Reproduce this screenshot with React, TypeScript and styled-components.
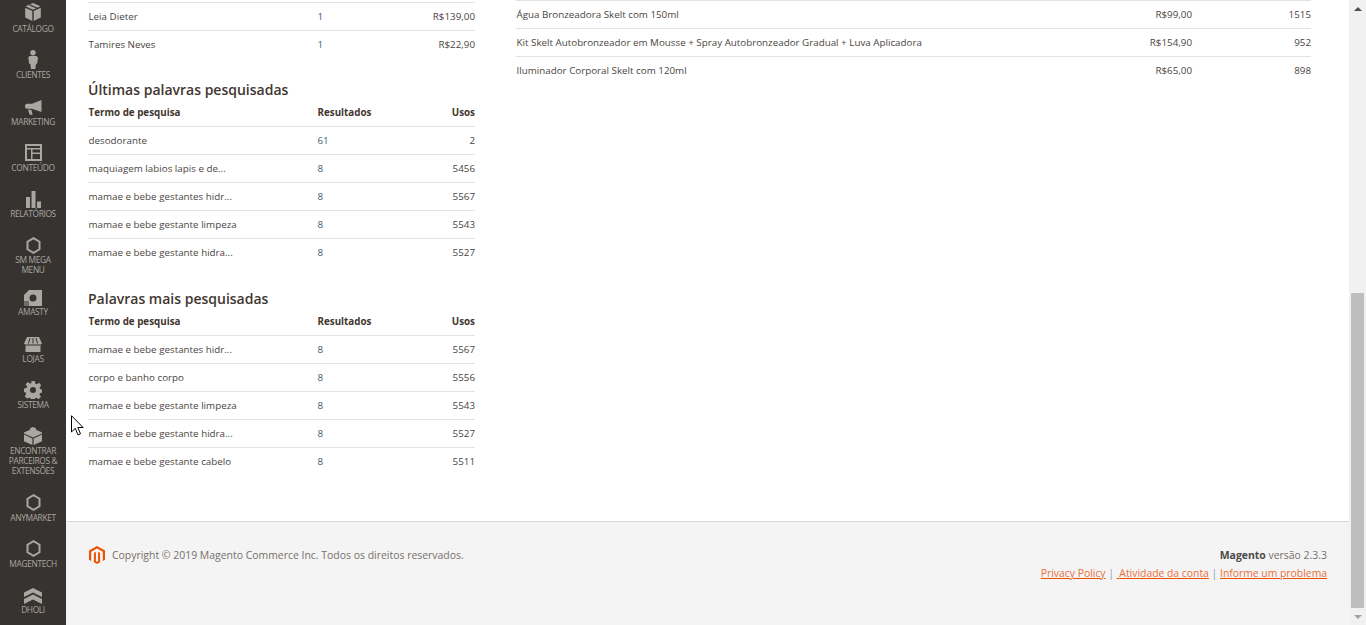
import React from "react";
import styled, { createGlobalStyle } from "styled-components";

const GlobalStyles = createGlobalStyle`
html, body {
  margin: 0;
  height: 100%;
  overflow: hidden;
}
body {
  box-sizing: border-box;
  background: #ffffff;
  font-family: "Open Sans", Arial, sans-serif;
  font-size: 9.8px;
  color: #4a4542;
}
`;

const iconColor = "#aaa6a0";

const BoxIcon = () => (
  <svg width="16" height="18" viewBox="0 0 16 18">
    <path fill={iconColor} d="M8 0l7.500 3.300L8 6.800.5 3.300zM.2 4.700l7.100 3.300V18L.2 14.400zM15.800 4.700L8.700 8v10l7.100-3.600z" />
    <path fill="#373330" d="M3.600 1.900l7.600 3.500 1.200-.6-7.500-3.500z" />
  </svg>
);
const PersonIcon = () => (
  <svg width="10" height="19" viewBox="0 0 10 19">
    <circle cx="5" cy="2.700" r="2.700" fill={iconColor} />
    <path fill={iconColor} d="M1.500 6h7L10 7.500l-.8 6-1.200.5-.7 5H3l-.7-5-1.200-.5-.8-6z" />
  </svg>
);
const MegaphoneIcon = () => (
  <svg width="17" height="15" viewBox="0 0 17 15">
    <path fill={iconColor} d="M16.500 0v12L7 8.800H1.500L0 7.500V5l1.500-1.300H7zM3 9.800h3.300l1.400 5H4.700z" />
  </svg>
);
const LayoutIcon = () => (
  <svg width="17" height="17" viewBox="0 0 17 17">
    <path fill={iconColor} fillRule="evenodd" d="M0 0h17v17H0zM2 2v2h13V2zM2 5.500V15h4V5.500zm5.500 0V8.500H15V5.500zm0 4.500v5H15v-5z" />
  </svg>
);
const BarsIcon = () => (
  <svg width="15" height="17" viewBox="0 0 15 17">
    <path fill={iconColor} d="M0 6h4v11H0zM5.500 0h4v17h-4zM11 10.500h4V17h-4z" />
  </svg>
);
const HexIcon = () => (
  <svg width="15" height="17" viewBox="0 0 15 17">
    <path fill="none" stroke={iconColor} strokeWidth="2" d="M7.500 1.200l6 3.500v7.600l-6 3.500-6-3.500V4.700z" />
  </svg>
);
const AmastyIcon = () => (
  <svg width="18" height="16" viewBox="0 0 18 16">
    <path fill={iconColor} fillRule="evenodd" d="M5 0h13v16H0V5zM9 4.500a3.500 3.500 0 1 0 0 7 3.500 3.500 0 0 0 0-7z" />
    <path fill="#6f6b67" d="M0 11h5v5H0z" />
  </svg>
);
const StoreIcon = () => (
  <svg width="18" height="15" viewBox="0 0 18 15">
    <path fill={iconColor} d="M3 0h12l3 6.500-1 1H1L0 6.500zM1.500 8.500h15V15h-15z" />
    <path stroke="#373330" strokeWidth="1" d="M6 1L4.500 6.500M9 1v5.500M12 1l1.500 5.500" />
  </svg>
);
const GearIcon = () => (
  <svg width="18" height="18" viewBox="0 0 18 18">
    <path fill={iconColor} fillRule="evenodd" d="M7.200 0h3.600l.5 2.600 1.500.7 2.300-1.500 2.100 2.500-1.600 2.100.5 1.500 2.400.6v3l-2.400.6-.6 1.600 1.500 2.100-2.400 2.400-2.200-1.500-1.500.6-.5 2.700H7.200l-.5-2.700-1.500-.6L3 17.600.7 15.200l1.500-2.100-.6-1.600L0 10.900V7.500l2.600-.6.6-1.500L1.600 3.300 3.800 1l2.300 1.500 1.500-.6zM9 6a3 3 0 1 0 0 6 3 3 0 0 0 0-6z" />
  </svg>
);
const BrickIcon = () => (
  <svg width="18" height="18" viewBox="0 0 18 18">
    <path fill={iconColor} d="M9 0l3 1.300v1.400L16 4.500l2 .9v1L9 10.500 0 6.400v-1l2-.9 4-1.800V1.300z" />
    <path fill={iconColor} d="M0 7.500l8.400 3.900V18L0 14.200zM18 7.500l-8.400 3.900V18l8.400-3.800z" />
  </svg>
);
const DholiIcon = () => (
  <svg width="18" height="16" viewBox="0 0 18 16">
    <path fill={iconColor} d="M9 0l9 4.500V9L9 4.500 0 9V4.500zM9 6.500l9 4.500v5L9 11.500 0 16v-5z" />
  </svg>
);

const MagentoLogo = () => (
  <svg width="16" height="18" viewBox="0 0 16 18">
    <path fill="#eb5202" d="M8 0L0 4.500v9.200l2.200 1.200V5.700L8 2.400l5.800 3.300v9.200l2.200-1.200V4.500z" />
    <path fill="#eb5202" d="M8 18l-3.100-1.800V6.900l2 -1.100v9.400l1.100.6 1.100-.6V5.800l2 1.100v9.300z" />
  </svg>
);

const Pointer = () => (
  <svg width="13" height="21" viewBox="0 0 13 21">
    <path fill="#ffffff" stroke="#000000" strokeWidth="1" d="M.5.700v16.200l3.800-3.600 2.600 6.500 2.600-1-2.700-6.300h5.300z" />
  </svg>
);

type MenuEntry = {
  icon: React.ReactNode;
  lines: string[];
  tight?: boolean;
};

const menu: MenuEntry[] = [
  { icon: <PersonIcon />, lines: ["CLIENTES"] },
  { icon: <MegaphoneIcon />, lines: ["MARKETING"] },
  { icon: <LayoutIcon />, lines: ["CONTEÚDO"] },
  { icon: <BarsIcon />, lines: ["RELATÓRIOS"] },
  { icon: <HexIcon />, lines: ["SM MEGA", "MENU"] },
  { icon: <AmastyIcon />, lines: ["AMASTY"], tight: true },
  { icon: <StoreIcon />, lines: ["LOJAS"] },
  { icon: <GearIcon />, lines: ["SISTEMA"] },
  { icon: <BrickIcon />, lines: ["ENCONTRAR", "PARCEIROS &", "EXTENSÕES"] },
  { icon: <HexIcon />, lines: ["ANYMARKET"] },
  { icon: <HexIcon />, lines: ["MAGENTECH"] },
  { icon: <DholiIcon />, lines: ["DHOLI"] },
];

type Row = {
  name: string;
  mid: string;
  end: string;
};

const lastSearches: Row[] = [
  { name: "desodorante", mid: "61", end: "2" },
  { name: "maquiagem labios lapis e de...", mid: "8", end: "5456" },
  { name: "mamae e bebe gestantes hidr...", mid: "8", end: "5567" },
  { name: "mamae e bebe gestante limpeza", mid: "8", end: "5543" },
  { name: "mamae e bebe gestante hidra...", mid: "8", end: "5527" },
];

const topSearches: Row[] = [
  { name: "mamae e bebe gestantes hidr...", mid: "8", end: "5567" },
  { name: "corpo e banho corpo", mid: "8", end: "5556" },
  { name: "mamae e bebe gestante limpeza", mid: "8", end: "5543" },
  { name: "mamae e bebe gestante hidra...", mid: "8", end: "5527" },
  { name: "mamae e bebe gestante cabelo", mid: "8", end: "5511" },
];

const customers: Row[] = [
  { name: "Leia Dieter", mid: "1", end: "R$139,00" },
  { name: "Tamires Neves", mid: "1", end: "R$22,90" },
];

const products: Row[] = [
  { name: "Água Bronzeadora Skelt com 150ml", mid: "R$99,00", end: "1515" },
  {
    name: "Kit Skelt Autobronzeador em Mousse + Spray Autobronzeador Gradual + Luva Aplicadora",
    mid: "R$154,90",
    end: "952",
  },
  { name: "Iluminador Corporal Skelt com 120ml", mid: "R$65,00", end: "898" },
];

const SearchTable = ({ title, rows }: { title: string; rows: Row[] }) => (
  <Section>
    <SectionTitle>{title}</SectionTitle>
    <HeadRow>
      <span>Termo de pesquisa</span>
      <span>Resultados</span>
      <End>Usos</End>
    </HeadRow>
    {rows.map((row) => (
      <TableRow key={row.name}>
        <span>{row.name}</span>
        <Linked>{row.mid}</Linked>
        <End>{row.end}</End>
      </TableRow>
    ))}
  </Section>
);

export default function App() {
  return (
    <Page>
      <GlobalStyles />
      <Sidebar>
        <FirstItem>
          <BoxIcon />
          <MenuLabel>CATÁLOGO</MenuLabel>
        </FirstItem>
        {menu.map((item) => (
          <MenuItem key={item.lines[0]} $tight={item.tight}>
            <MenuIcon>{item.icon}</MenuIcon>
            {item.lines.map((line) => (
              <MenuLabel key={line}>{line}</MenuLabel>
            ))}
          </MenuItem>
        ))}
      </Sidebar>
      <Main>
        <Content>
          <LeftColumn>
            {customers.map((row) => (
              <TableRow key={row.name}>
                <span>{row.name}</span>
                <Linked>{row.mid}</Linked>
                <End>{row.end}</End>
              </TableRow>
            ))}
            <SearchTable title="Últimas palavras pesquisadas" rows={lastSearches} />
            <SearchTable title="Palavras mais pesquisadas" rows={topSearches} />
          </LeftColumn>
          <RightColumn>
            {products.map((row) => (
              <ProductRow key={row.name}>
                <span>{row.name}</span>
                <End>{row.mid}</End>
                <End>{row.end}</End>
              </ProductRow>
            ))}
          </RightColumn>
        </Content>
        <Footer>
          <Copyright>
            <MagentoLogo />
            <span>Copyright © 2019 Magento Commerce Inc. Todos os direitos reservados.</span>
          </Copyright>
          <FooterRight>
            <Version>
              <strong>Magento</strong> versão 2.3.3
            </Version>
            <FooterLinks>
              <FooterLink>Privacy Policy</FooterLink> | <FooterLink>{"\u00a0"}Atividade da conta</FooterLink> |{" "}
              <FooterLink>Informe um problema</FooterLink>
            </FooterLinks>
          </FooterRight>
        </Footer>
      </Main>
      <ScrollBar>
        <ScrollArrow $up />
        <ScrollSpace />
        <ScrollThumb />
        <ScrollArrow />
      </ScrollBar>
      <PointerSpot>
        <Pointer />
      </PointerSpot>
    </Page>
  );
}

const Page = styled.div`
  position: relative;
  display: flex;
  width: 1366px;
  height: 625px;
  overflow: hidden;
`;

const Sidebar = styled.nav`
  flex: 0 0 66px;
  display: flex;
  flex-direction: column;
  align-items: center;
  background: #373330;
  overflow: hidden;
`;

const FirstItem = styled.div`
  display: flex;
  flex-direction: column;
  align-items: center;
  gap: 3px;
  margin-top: 3px;
  height: 31px;
`;

const MenuItem = styled.div<{ $tight?: boolean }>`
  display: flex;
  flex-direction: column;
  align-items: center;
  width: 100%;
  flex-shrink: 0;
  margin-top: ${(p) => (p.$tight ? "8px" : "12.3px")};
`;

const MenuIcon = styled.div`
  display: flex;
  align-items: flex-end;
  justify-content: center;
  box-sizing: border-box;
  height: 24px;
  padding-bottom: 1.5px;
`;

const MenuLabel = styled.div`
  font-size: 8.4px;
  line-height: 10px;
  letter-spacing: -0.35px;
  color: #aaa6a0;
  white-space: nowrap;
`;

const Main = styled.main`
  flex: 1;
  min-width: 0;
  display: flex;
  flex-direction: column;
`;

const Content = styled.div`
  flex: 1;
  display: flex;
  align-items: flex-start;
  padding: 0 38px 0 22px;
`;

const LeftColumn = styled.div`
  width: 387px;
  padding-top: 2px;
`;

const RightColumn = styled.div`
  flex: 1;
  margin-left: 41px;
`;

const Section = styled.section`
  margin-top: 22px;

  & + & {
    margin-top: 23px;
  }
`;

const SectionTitle = styled.h3`
  margin: 0 0 6px;
  font-size: 14px;
  line-height: 19px;
  font-weight: 600;
  color: #41362f;
`;

const TableRow = styled.div`
  display: grid;
  grid-template-columns: 229px 1fr auto;
  align-items: center;
  height: 26px;
  padding-bottom: 1px;
  padding-left: 0.5px;
  border-top: 1px solid #e3e3e3;
`;

const HeadRow = styled(TableRow)`
  height: 20px;
  padding-top: 1px;
  padding-bottom: 0;
  border-top: none;
  font-weight: 700;
  align-items: flex-start;
  color: #41362f;
`;

const ProductRow = styled(TableRow)`
  grid-template-columns: 1fr 80px 119px;
`;

const Linked = styled.span`
  color: #3c5a73;
`;

const End = styled.span`
  text-align: right;
`;

const Footer = styled.footer`
  flex: 0 0 104px;
  display: flex;
  justify-content: space-between;
  align-items: flex-start;
  box-sizing: border-box;
  padding: 24px 22px 0 23px;
  background: #f4f4f4;
  border-top: 1px solid #d9d9d9;
  color: #75706b;
  font-size: 10.45px;
`;

const Copyright = styled.div`
  display: flex;
  align-items: center;
  gap: 7px;
`;

const FooterRight = styled.div`
  text-align: right;
`;

const Version = styled.div`
  line-height: 18px;
  margin-bottom: 2px;

  strong {
    color: #4a4a4a;
  }
`;

const FooterLinks = styled.div`
  line-height: 14px;
  font-size: 10.38px;
  color: #8aa0b2;
`;

const FooterLink = styled.a`
  color: #e8703a;
  text-decoration: underline #eb5202;
`;

const ScrollBar = styled.div`
  flex: 0 0 17px;
  display: flex;
  flex-direction: column;
  background: #f1f1f1;
`;

const ScrollSpace = styled.div`
  height: 276px;
`;

const ScrollThumb = styled.div`
  flex: 1;
  margin: 0 2px;
  background: #bebebe;
`;

const ScrollArrow = styled.div<{ $up?: boolean }>`
  flex: 0 0 17px;
  display: flex;
  align-items: center;
  justify-content: center;

  &::after {
    content: "";
    border-left: 4px solid transparent;
    border-right: 4px solid transparent;
    ${(p) =>
      p.$up ? "border-bottom: 4px solid #505050;" : "border-top: 4px solid #a3a3a3;"}
  }
`;

const PointerSpot = styled.div`
  position: absolute;
  left: 71px;
  top: 415px;
  line-height: 0;
`;
